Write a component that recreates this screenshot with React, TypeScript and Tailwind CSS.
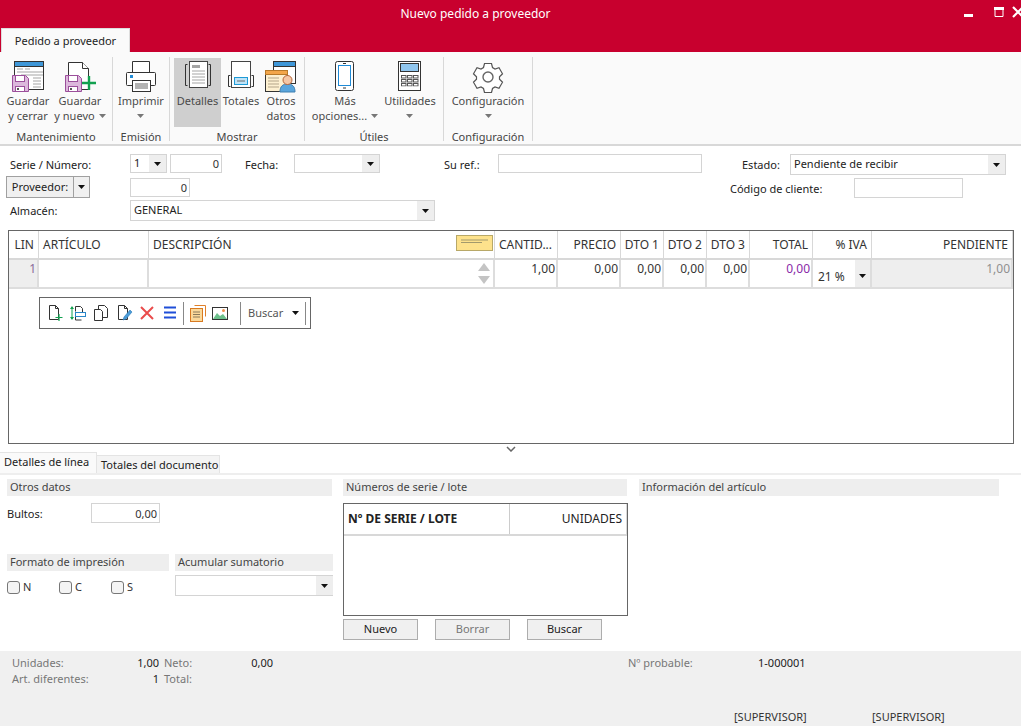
import type { ReactNode } from "react";

function Caret({ gray = false }: { gray?: boolean }) {
  return (
    <svg width="7" height="4" viewBox="0 0 7 4" className="inline-block shrink-0">
      <path d="M0 0h7L3.5 4z" fill={gray ? "#777777" : "#111111"} />
    </svg>
  );
}

function Floppy({ x, y }: { x: number; y: number }) {
  return (
    <g transform={`translate(${x} ${y})`}>
      <path d="M.5.5h13l3 3v13H.5z" fill="#dcb8dc" stroke="#9b4f9b" />
      <rect x="3.5" y=".5" width="9" height="6" fill="#fff" stroke="#9b4f9b" />
      <rect x="3.5" y="11.5" width="9" height="5" fill="#fff" stroke="#9b4f9b" />
      <rect x="5" y="13" width="2" height="2" fill="#555" />
    </g>
  );
}

function SaveCloseIcon() {
  return (
    <svg width="32" height="32" viewBox="0 0 32 32">
      <rect x="2.5" y=".5" width="29" height="28" fill="#fff" stroke="#333" />
      <rect x="2.5" y=".5" width="29" height="5" fill="#3f97d8" stroke="#333" />
      <path d="M5 8h6M13 8h5M5 11h26M9 14h22M21 17h8M21 20h8M21 23h8M21 26h8" stroke="#a5a5a5" />
      <Floppy x={0} y={14} />
    </svg>
  );
}

function SaveNewIcon() {
  return (
    <svg width="32" height="32" viewBox="0 0 32 32">
      <path d="M4.5 1.5h14l6 6v21h-20z" fill="#fff" stroke="#333" />
      <path d="M18.5 1.5v6h6" fill="#fff" stroke="#333" />
      <Floppy x={1} y={14} />
      <path d="M25 15v14M18 22h14" stroke="#12a150" strokeWidth="2.4" />
    </svg>
  );
}

function PrinterIcon() {
  return (
    <svg width="32" height="32" viewBox="0 0 32 32">
      <path d="M7.5 11V.5h17V11" fill="#fff" stroke="#333" />
      <rect x="1.5" y="11.5" width="29" height="13" rx="1" fill="#fff" stroke="#333" />
      <rect x="5" y="14" width="3" height="3" fill="#1f8ad6" />
      <rect x="7.5" y="19.5" width="18" height="11" fill="#fff" stroke="#333" />
      <path d="M10 23h13M10 25h13M10 27h13" stroke="#666" />
    </svg>
  );
}

function DetailsIcon() {
  return (
    <svg width="32" height="32" viewBox="0 0 32 32">
      <path d="M5.5 3.5h-2v21h2M26.5 3.5h2v21h-2" fill="none" stroke="#333" />
      <rect x="7.5" y=".5" width="18" height="26" fill="#fff" stroke="#444" />
      <rect x="10" y="4" width="8" height="3" fill="#a5a5a5" />
      <path d="M10 10h13M10 13h13M10 16h13M10 19h13M10 22h13" stroke="#a5a5a5" />
    </svg>
  );
}

function TotalsIcon() {
  return (
    <svg width="32" height="32" viewBox="0 0 32 32">
      <path d="M5.5 14.5h-2v11h2M26.5 14.5h2v11h-2" fill="none" stroke="#333" />
      <rect x="6.5" y=".5" width="19" height="26" fill="#fff" stroke="#444" />
      <rect x="9.5" y="16.5" width="13" height="7" fill="#bfe3f7" stroke="#1f9ad6" />
      <path d="M12 20h8" stroke="#6a6a6a" />
    </svg>
  );
}

function OtherDataIcon() {
  return (
    <svg width="32" height="32" viewBox="0 0 32 32">
      <rect x="8.5" y=".5" width="22" height="22" fill="#fff" stroke="#333" />
      <rect x="8.5" y=".5" width="22" height="5" fill="#3f97d8" stroke="#333" />
      <rect x=".5" y="9.5" width="22" height="21" fill="#fdf0d0" stroke="#333" />
      <rect x=".5" y="9.5" width="22" height="4" fill="#f3a64a" stroke="#b87a2a" />
      <path d="M3 17h11M3 20h11M3 23h11M3 26h11" stroke="#b3a58a" />
      <path d="M15 31c0-6 3-8 7.500-8s7.500 2 7.500 8z" fill="#5aa5dc" stroke="#3f7fb0" />
      <circle cx="22.500" cy="19" r="4.500" fill="#f5c7a5" stroke="#b5653a" />
    </svg>
  );
}

function PhoneIcon() {
  return (
    <svg width="32" height="32" viewBox="0 0 32 32">
      <rect x="6.500" y=".5" width="18" height="29" rx="2" fill="#fff" stroke="#333" />
      <rect x="9.500" y="4.500" width="12" height="20" fill="#fff" stroke="#1f8ad6" />
      <path d="M14 2.500h3M14 27h3" stroke="#333" />
    </svg>
  );
}

function CalculatorIcon() {
  const keys = [14, 18, 22];
  return (
    <svg width="32" height="32" viewBox="0 0 32 32">
      <rect x="4.500" y=".5" width="22" height="29" fill="#fff" stroke="#333" />
      <rect x="6.500" y="2.500" width="18" height="8" fill="#90c6ee" stroke="#333" />
      {keys.map((y) =>
        [7, 13, 19].map((x) => (
          <rect key={`${x}-${y}`} x={x + 0.5} y={y + 0.5} width="4.500" height="2.500" fill="#fff" stroke="#555" />
        )),
      )}
      <path d="M7 26h18" stroke="#fff" />
    </svg>
  );
}

function GearIcon() {
  return (
    <svg width="32" height="32" viewBox="0 0 32 32">
      <path
        d="M12.500 2.500h7l1 4 2.500 1.500 4-1.200 3.500 6-3 2.900v2.600l3 2.900-3.500 6-4-1.200-2.500 1.500-1 4h-7l-1-4-2.500-1.500-4 1.200-3.500-6 3-2.900v-2.600l-3-2.900 3.500-6 4 1.200 2.500-1.500z"
        fill="#fff"
        stroke="#555"
        strokeWidth="1.200"
      />
      <circle cx="16" cy="16" r="5" fill="#fff" stroke="#666" strokeWidth="1.400" />
    </svg>
  );
}

function RibbonButton({
  icon,
  lines,
  width,
  active = false,
  inlineCaret = false,
  caretBelow = false,
}: {
  icon: ReactNode;
  lines: string[];
  width: string;
  active?: boolean;
  inlineCaret?: boolean;
  caretBelow?: boolean;
}) {
  return (
    <div className={`flex h-[69px] flex-col items-center pt-[3px] text-center ${width} ${active ? "bg-[#cfcfcf]" : ""}`}>
      {icon}
      <div className="whitespace-nowrap leading-[15px] text-[#4a4a4a]">
        {lines.map((line, i) => (
          <div key={line} className="flex h-[15px] items-center justify-center gap-[4px]">
            {line}
            {inlineCaret && i === lines.length - 1 && <Caret gray />}
          </div>
        ))}
        {caretBelow && (
          <div className="flex h-[15px] items-center justify-center">
            <Caret gray />
          </div>
        )}
      </div>
    </div>
  );
}

function RibbonGroup({ label, width, children, pad }: { label: string; width: string; children: ReactNode; pad?: string }) {
  return (
    <div className={`flex h-[84px] shrink-0 flex-col border-r border-[#d8d8d8] pt-px ${width}`}>
      <div className={`flex h-[69px] ${pad ?? ""}`}>{children}</div>
      <div className="mt-[2px] h-[14px] whitespace-nowrap text-center leading-[15px] text-[#444444]">{label}</div>
    </div>
  );
}

function Input({ className, children }: { className: string; children?: ReactNode }) {
  return (
    <div className={`flex shrink-0 items-center justify-end border border-[#d4d4d4] bg-white px-[2px] leading-none text-[#333333] ${className}`}>
      {children}
    </div>
  );
}

function Combo({ className, text, button = "w-[17px]" }: { className: string; text?: string; button?: string }) {
  return (
    <div className={`flex shrink-0 border border-[#d4d4d4] bg-white text-[#222222] ${className}`}>
      <div className="flex flex-1 items-center overflow-hidden pl-[3px]">{text}</div>
      <div className={`flex items-center justify-center bg-[#eeeeee] ${button}`}>
        <Caret />
      </div>
    </div>
  );
}

const tableCols = "grid grid-cols-[30px_110px_346px_63px_63px_43px_43px_43px_63px_59px_141px]";

function Th({ children, right = false }: { children: string; right?: boolean }) {
  return (
    <div className={`flex h-[27px] items-center overflow-hidden whitespace-nowrap border-r border-[#d8d8d8] px-[4px] text-[12px] text-[#333333] ${right ? "justify-end" : ""}`}>
      {children}
    </div>
  );
}

function Td({ children, className = "" }: { children?: ReactNode; className?: string }) {
  return (
    <div className={`flex h-[27px] justify-end border-r-2 border-[#dddddd] pr-px pt-px text-[12px] leading-[16px] ${className}`}>
      {children}
    </div>
  );
}

function SectionTitle({ children, className }: { children: string; className: string }) {
  return (
    <div className={`flex h-[17px] items-center bg-[#eeeeee] pl-[3px] text-[#444444] ${className}`}>{children}</div>
  );
}

function Check({ label, className }: { label: string; className: string }) {
  return (
    <div className={`flex items-center gap-[3px] text-[#333333] ${className}`}>
      <div className="h-[13px] w-[13px] rounded-[3px] border border-[#777777] bg-[#f4f4f4]" />
      {label}
    </div>
  );
}

function FlatButton({ children, disabled = false }: { children: string; disabled?: boolean }) {
  return (
    <div className={`flex h-[21px] w-[75px] items-center justify-center border border-[#adadad] bg-[#f0f0f0] ${disabled ? "text-[#777777]" : "text-[#222222]"}`}>
      {children}
    </div>
  );
}

function ToolIcon({ children }: { children: ReactNode }) {
  return (
    <svg width="18" height="18" viewBox="0 0 18 18" className="shrink-0">
      {children}
    </svg>
  );
}

function LineToolbar() {
  const page = "M3.500 1.500h6l3 3v11h-9z M9.500 1.500v3h3";
  return (
    <div className="ml-[30px] mt-[8px] flex h-[32px] w-[272px] items-center border border-[#666666] bg-white pl-[6px]">
      <div className="flex w-[137px] items-center gap-[5px]">
        <ToolIcon>
          <path d={page} fill="none" stroke="#333" />
          <path d="M13 10v7M9.500 13.500h7" stroke="#12a150" strokeWidth="1.200" />
        </ToolIcon>
        <ToolIcon>
          <path d="M6.500 2.500h5l2 2v4M6.500 2.500v5M6.500 13v3h6" fill="none" stroke="#333" />
          <rect x="6.500" y="8.500" width="10" height="4" fill="#fff" stroke="#2a86c8" />
          <path d="M3 3v12" stroke="#12a150" />
          <path d="M1 5l2-3 2 3zM1 13l2 3 2-3z" fill="#12a150" />
        </ToolIcon>
        <ToolIcon>
          <path d="M6.500 1.500h6l3 3v9h-9z" fill="#fff" stroke="#333" />
          <path d="M2.500 5.500h6l2 2v9h-8z" fill="#fff" stroke="#333" />
        </ToolIcon>
        <ToolIcon>
          <path d={page} fill="none" stroke="#333" />
          <path d="M8 16l1-3 6-7 2 2-6 7z" fill="#4a9bd8" stroke="#2a7ab8" strokeWidth=".6" />
        </ToolIcon>
        <ToolIcon>
          <path d="M3 3l12 12M15 3L3 15" stroke="#ea4c4c" strokeWidth="2" />
        </ToolIcon>
        <ToolIcon>
          <path d="M3 3.500h12M3 8.500h12M3 13.500h12" stroke="#1f4fd8" strokeWidth="2" />
        </ToolIcon>
      </div>
      <div className="h-[23px] w-px bg-[#888888]" />
      <div className="ml-[5px] flex w-[49px] items-center gap-[4px]">
        <ToolIcon>
          <path d="M5.500 1.500h11v11" fill="none" stroke="#e0802a" />
          <rect x="1.500" y="4.500" width="12" height="13" fill="#fbd99a" stroke="#d87a22" />
          <path d="M4 8h7M4 10.500h7M4 13h7" stroke="#8a7a5a" />
        </ToolIcon>
        <ToolIcon>
          <rect x="1.500" y="3.500" width="15" height="12" fill="#fff" stroke="#333" />
          <path d="M2 15l4-6 3 3 3-2 4 5z" fill="#6cc08b" />
          <circle cx="12.500" cy="6.500" r="1.500" fill="#f0904a" />
        </ToolIcon>
      </div>
      <div className="ml-[2px] h-[23px] w-px bg-[#888888]" />
      <div className="ml-[7px] flex w-[57px] items-center gap-[9px] text-[#555555]">
        Buscar
        <Caret />
      </div>
      <div className="h-[23px] w-px bg-[#888888]" />
    </div>
  );
}

export default function App() {
  return (
    <div className="flex h-[726px] w-[1021px] flex-col overflow-hidden bg-white font-['Noto_Sans','Open_Sans',sans-serif] text-[11px]">
      {/* title bar */}
      <div className="h-[52px] shrink-0 bg-[#c8002e]">
        <div className="flex h-[28px] items-center">
          <div className="flex-1 pb-px pl-[-1px] text-center text-[12px] text-white">Nuevo pedido a proveedor</div>
          <div className="mb-[4px] flex h-[14px] items-center">
            <svg width="70" height="14" viewBox="0 0 70 14">
              <rect x="13" y="9" width="9" height="3" fill="#fff" />
              <path d="M44 2.500h8v9h-8z" fill="none" stroke="#fff" />
              <rect x="43" y="2" width="10" height="3" fill="#fff" />
              <path d="M72 2l10 10M82 2L72 12" transform="translate(-10 0)" stroke="#fff" strokeWidth="2.200" />
            </svg>
          </div>
        </div>
        <div className="ml-px flex h-[24px] w-[129px] items-center justify-center border border-b-0 border-[#dddddd] bg-[#fafafa] pt-px text-[#222222]">
          Pedido a proveedor
        </div>
      </div>

      {/* ribbon */}
      <div className="flex h-[94px] shrink-0 border-b-2 border-[#d8d8d8] bg-[#fafafa] pt-[5px]">
        <RibbonGroup label="Mantenimiento" width="w-[113px]" pad="pl-[2px]">
          <RibbonButton width="w-[52px]" icon={<SaveCloseIcon />} lines={["Guardar", "y cerrar"]} />
          <RibbonButton width="w-[52px]" icon={<SaveNewIcon />} lines={["Guardar", "y nuevo"]} inlineCaret />
        </RibbonGroup>
        <RibbonGroup label="Emisión" width="w-[57px]">
          <RibbonButton width="w-[56px]" icon={<PrinterIcon />} lines={["Imprimir"]} caretBelow />
        </RibbonGroup>
        <RibbonGroup label="Mostrar" width="w-[135px]" pad="pl-[4px]">
          <RibbonButton width="w-[47px]" active icon={<DetailsIcon />} lines={["Detalles"]} />
          <RibbonButton width="w-[40px]" icon={<TotalsIcon />} lines={["Totales"]} />
          <RibbonButton width="w-[40px]" icon={<OtherDataIcon />} lines={["Otros", "datos"]} />
        </RibbonGroup>
        <RibbonGroup label="Útiles" width="w-[139px]" pad="pl-[4px]">
          <RibbonButton width="w-[72px]" icon={<PhoneIcon />} lines={["Más", "opciones..."]} inlineCaret />
          <RibbonButton width="w-[58px]" icon={<CalculatorIcon />} lines={["Utilidades"]} caretBelow />
        </RibbonGroup>
        <RibbonGroup label="Configuración" width="w-[89px]">
          <RibbonButton width="w-[88px]" icon={<GearIcon />} lines={["Configuración"]} caretBelow />
        </RibbonGroup>
      </div>

      {/* header form */}
      <div className="h-[84px] shrink-0 pt-[8px] text-[#222222]">
        <div className="flex h-[21px]">
          <div className="w-[130px] pl-[10px] leading-[22px]">Serie / Número:</div>
          <Combo className="h-[19px] w-[37px]" text="1" button="w-[17px]" />
          <Input className="ml-[3px] h-[19px] w-[52px]">0</Input>
          <div className="w-[72px] pl-[23px] leading-[22px]">Fecha:</div>
          <Combo className="h-[19px] w-[86px]" />
          <div className="w-[118px] pl-[64px] leading-[22px]">Su ref.:</div>
          <Input className="h-[19px] w-[204px]" />
          <div className="w-[88px] pl-[40px] leading-[22px]">Estado:</div>
          <Combo className="h-[21px] w-[216px]" text="Pendiente de recibir" />
        </div>
        <div className="-mt-[-1px] flex h-[24px] items-start">
          <div className="ml-[6px] flex h-[22px] w-[84px] border border-[#a0a0a0] bg-[#f0f0f0]">
            <div className="flex flex-1 items-center justify-center border-r border-[#a0a0a0]">Proveedor:</div>
            <div className="flex w-[15px] items-center justify-center">
              <Caret />
            </div>
          </div>
          <Input className="ml-[40px] mt-[2px] h-[19px] w-[60px]">0</Input>
          <div className="ml-[540px] mt-[2px] w-[124px] leading-[22px]">Código de cliente:</div>
          <Input className="mt-[2px] h-[20px] w-[109px]" />
        </div>
        <div className="flex h-[22px] items-start">
          <div className="w-[130px] pl-[10px] leading-[22px]">Almacén:</div>
          <Combo className="h-[21px] w-[305px]" text="GENERAL" />
        </div>
      </div>

      {/* lines grid */}
      <div className="mx-[8px] h-[214px] w-[1006px] shrink-0 border border-[#666666]">
        <div className={`${tableCols} border-b-2 border-[#d8d8d8]`}>
          <Th right>LIN</Th>
          <Th>ARTÍCULO</Th>
          <div className="flex h-[27px] items-center justify-between border-r border-[#d8d8d8] pl-[4px] pr-[1px] text-[12px] text-[#333333]">
            DESCRIPCIÓN
            <svg width="37" height="16" viewBox="0 0 37 16" className="mb-[4px]">
              <rect x=".5" y=".5" width="36" height="15" fill="#fde28c" stroke="#b8a868" />
              <path d="M5 5h27M5 7.500h21" stroke="#a39a6c" />
            </svg>
          </div>
          <Th>CANTID...</Th>
          <Th right>PRECIO</Th>
          <Th right>DTO 1</Th>
          <Th right>DTO 2</Th>
          <Th right>DTO 3</Th>
          <Th right>TOTAL</Th>
          <Th right>% IVA</Th>
          <Th right>PENDIENTE</Th>
        </div>
        <div className={`${tableCols} border-b-2 border-[#dddddd]`}>
          <Td className="bg-[#eeeeee] text-[#8a6a9a]">1</Td>
          <Td />
          <div className="flex h-[27px] flex-col items-end justify-center gap-[5px] border-r-2 border-[#dddddd] pr-[3px]">
            <svg width="12" height="8" viewBox="0 0 12 8">
              <path d="M6 0l6 8H0z" fill="#c4c4c4" />
            </svg>
            <svg width="12" height="8" viewBox="0 0 12 8">
              <path d="M6 8l6-8H0z" fill="#c4c4c4" />
            </svg>
          </div>
          <Td className="text-[#333333]">1,00</Td>
          <Td className="text-[#333333]">0,00</Td>
          <Td className="text-[#333333]">0,00</Td>
          <Td className="text-[#333333]">0,00</Td>
          <Td className="text-[#333333]">0,00</Td>
          <Td className="text-[#8a2aa8]">0,00</Td>
          <div className="flex h-[27px] border-r-2 border-[#dddddd] text-[12px] text-[#333333]">
            <div className="flex flex-1 items-end pb-px pl-[5px]">21 %</div>
            <div className="flex w-[15px] items-center justify-center bg-[#eeeeee] pt-[5px]">
              <Caret />
            </div>
          </div>
          <Td className="bg-[#eeeeee] text-[#909090]">1,00</Td>
        </div>
        <LineToolbar />
      </div>

      {/* splitter */}
      <div className="flex h-[10px] shrink-0 items-center justify-center">
        <svg width="10" height="6" viewBox="0 0 10 6">
          <path d="M1 1l4 4 4-4" fill="none" stroke="#666" strokeWidth="1.500" />
        </svg>
      </div>

      {/* detail tabs */}
      <div className="flex h-[21px] shrink-0 items-end border-b-2 border-[#eeeeee]">
        <div className="h-[21px] w-[97px] border-r border-t border-[#e4e4e4] bg-[#fafafa] pl-[4px] leading-[18px] text-[#222222]">
          Detalles de línea
        </div>
        <div className="h-[18px] w-[123px] border-r border-t border-[#e4e4e4] bg-[#f4f4f4] pl-[4px] leading-[18px] text-[#222222]">
          Totales del documento
        </div>
      </div>

      {/* detail panels */}
      <div className="flex h-[176px] shrink-0 pl-[7px] pt-[4px]">
        <div className="w-[326px]">
          <SectionTitle className="w-[325px]">Otros datos</SectionTitle>
          <div className="mt-[7px] flex h-[19px] items-start">
            <div className="w-[84px] leading-[22px] text-[#222222]">Bultos:</div>
            <Input className="h-[20px] w-[69px]">0,00</Input>
          </div>
          <div className="mt-[32px] flex gap-[6px]">
            <SectionTitle className="w-[162px]">Formato de impresión</SectionTitle>
            <SectionTitle className="w-[158px]">Acumular sumatorio</SectionTitle>
          </div>
          <div className="mt-[4px] flex">
            <div className="flex w-[168px] pt-[4px]">
              <Check label="N" className="w-[52px]" />
              <Check label="C" className="w-[52px]" />
              <Check label="S" className="w-[52px]" />
            </div>
            <Combo className="h-[21px] w-[158px] border-r-0" />
          </div>
        </div>
        <div className="ml-[10px] w-[285px]">
          <SectionTitle className="w-[284px]">Números de serie / lote</SectionTitle>
          <div className="mt-[7px] h-[113px] border border-[#666666]">
            <div className="flex h-[32px] border-b-2 border-[#d8d8d8] text-[12px] text-[#222222]">
              <div className="flex w-[166px] items-center border-r border-[#cccccc] pl-[4px] font-bold">Nº DE SERIE / LOTE</div>
              <div className="flex flex-1 items-center justify-end border-r border-[#d8d8d8] pr-[4px]">UNIDADES</div>
            </div>
          </div>
          <div className="mt-[3px] flex gap-[17px]">
            <FlatButton>Nuevo</FlatButton>
            <FlatButton disabled>Borrar</FlatButton>
            <FlatButton>Buscar</FlatButton>
          </div>
        </div>
        <div className="ml-[11px] w-[360px]">
          <SectionTitle className="w-[360px]">Información del artículo</SectionTitle>
        </div>
      </div>

      {/* footer */}
      <div className="flex-1 bg-[#f0f0f0] pt-[4px] text-[#777777]">
        <div className="flex h-[15px] leading-[15px]">
          <div className="w-[125px] pl-[12px]">Unidades:</div>
          <div className="w-[34px] text-right text-[#222222]">1,00</div>
          <div className="w-[60px] pl-[5px]">Neto:</div>
          <div className="w-[54px] text-right text-[#222222]">0,00</div>
          <div className="ml-[355px] w-[130px]">Nº probable:</div>
          <div className="text-[#222222]">1-000001</div>
        </div>
        <div className="mt-px flex h-[15px] leading-[15px]">
          <div className="w-[125px] pl-[12px]">Art. diferentes:</div>
          <div className="w-[34px] text-right text-[#222222]">1</div>
          <div className="w-[60px] pl-[5px]">Total:</div>
        </div>
        <div className="ml-[734px] mt-[23px] flex text-[#333333]">
          <div className="w-[138px]">[SUPERVISOR]</div>
          <div>[SUPERVISOR]</div>
        </div>
      </div>
    </div>
  );
}
